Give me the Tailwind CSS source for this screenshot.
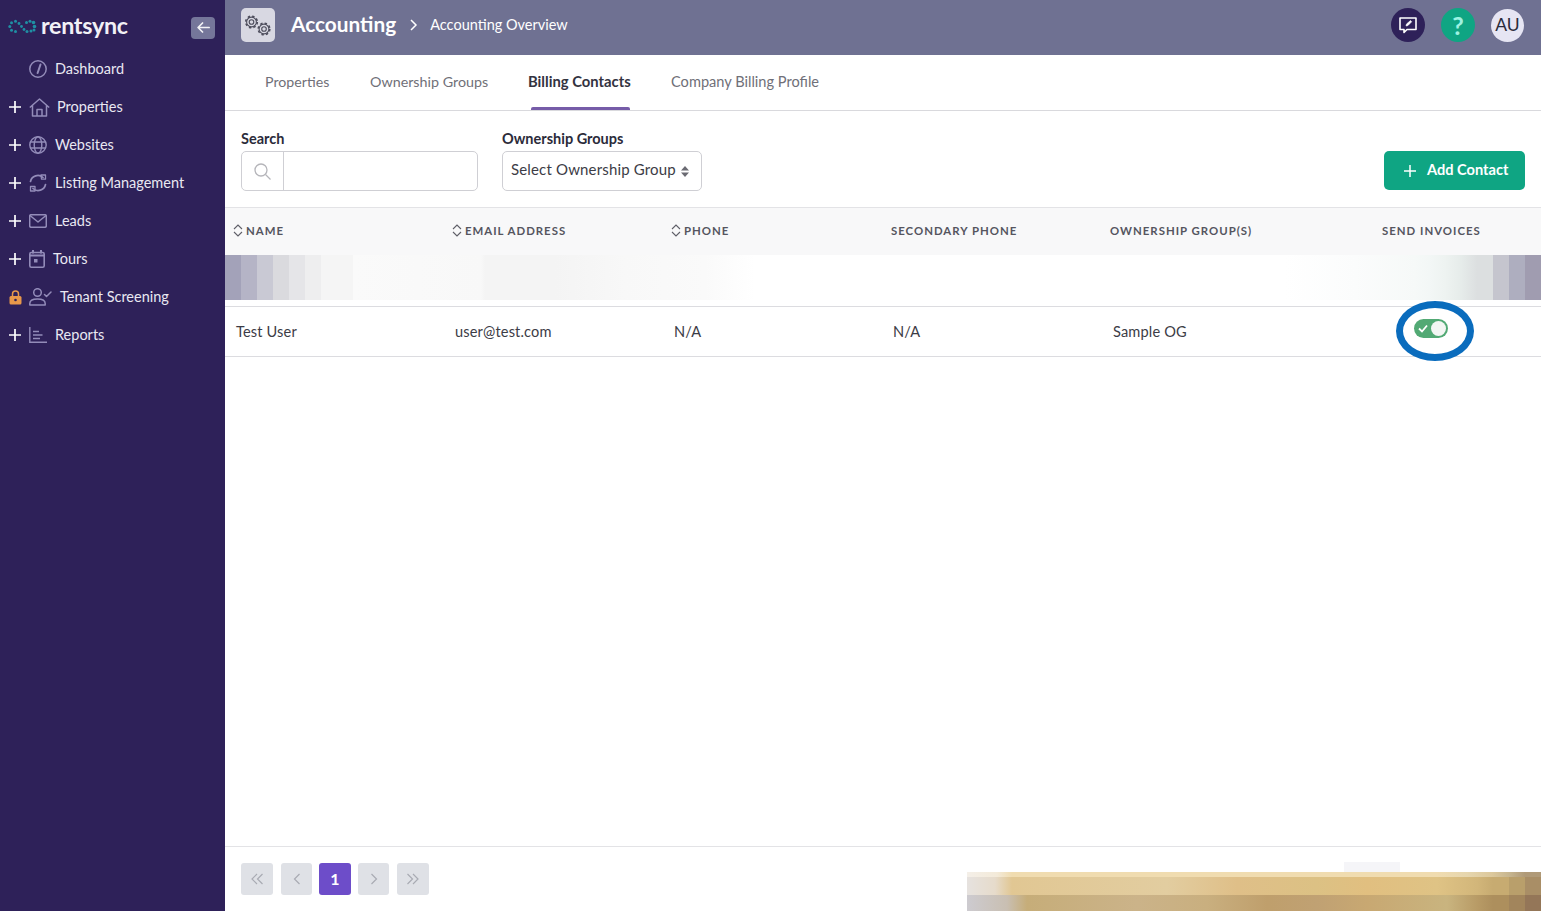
<!DOCTYPE html>
<html lang="en">
<head>
<meta charset="utf-8">
<title>Accounting Overview</title>
<script src="https://cdn.jsdelivr.net/npm/@tailwindcss/browser@4"></script>
</head>
<body class="font-['Lato','Noto_Sans',sans-serif] text-[#2b2b3a] overflow-hidden">
<div class="flex h-[911px] w-[1541px]">
  <!-- Sidebar -->
  <aside class="w-[225px] shrink-0 bg-[#2e2159] text-[#e9e8f2] text-[14.5px]">
    <div class="flex h-[50px] items-center pl-[8px] pr-[10px] pt-[5px]">
      <svg class="w-[29px] h-[15px] -mt-[3px]" viewBox="0 0 29 14" fill="#1f8fa3">
        <circle cx="1.800" cy="7" r="1.500"/><circle cx="3.500" cy="3.200" r="1.500"/><circle cx="3.500" cy="10.800" r="1.500"/><circle cx="7.500" cy="1.800" r="1.500"/><circle cx="7.500" cy="12" r="1.500"/><circle cx="11" cy="4" r="1.400"/><circle cx="13.500" cy="7" r="1.400"/><circle cx="16" cy="10" r="1.400"/><circle cx="19" cy="12" r="1.500"/><circle cx="18.500" cy="3" r="1.500"/><circle cx="22" cy="1.800" r="1.500"/><circle cx="23" cy="11.500" r="1.500"/><circle cx="25.500" cy="3" r="1.800"/><circle cx="26.500" cy="7" r="1.800"/><circle cx="26" cy="10.500" r="1.500"/>
      </svg>
      <span class="ml-[4px] -mt-[3px] text-[23.300px] leading-none font-bold tracking-[-0.3px] text-[#f2f1f6]">rentsync</span>
      <button class="ml-auto w-[24px] h-[22px] rounded-[4px] bg-[#75769a] flex items-center justify-center">
        <svg class="w-[15px] h-[15px]" viewBox="0 0 16 16" fill="none" stroke="#f2f2f6" stroke-width="1.800" stroke-linecap="round" stroke-linejoin="round"><path d="M14 8H2.500M7 3.200 2.200 8 7 12.800"/></svg>
      </button>
    </div>
    <nav>
      <a class="flex items-center h-[38px]">
        <span class="w-[29px]"></span>
        <svg class="w-[18px] h-[18px]" viewBox="0 0 18 18" fill="none" stroke="#938cb9" stroke-width="1.500" stroke-linecap="round"><circle cx="9" cy="9" r="8.200"/><path d="M11.500 4.500 8.600 13" stroke-width="2"/></svg>
        <span class="ml-[8px]">Dashboard</span>
      </a>
      <a class="flex items-center h-[38px]">
        <span class="w-[29px] pl-[9px]"><svg class="w-[12px] h-[12px]" viewBox="0 0 12 12" stroke="#fff" stroke-width="1.700"><path d="M6 0v12M0 6h12"/></svg></span>
        <svg class="w-[21px] h-[19px]" viewBox="0 0 21 19" fill="none" stroke="#938cb9" stroke-width="1.500" stroke-linejoin="round"><path d="M.8 9.500 10.500 1l9.700 8.500M3.500 7.500V18h14V7.500M8 18v-6.500h5V18"/></svg>
        <span class="ml-[7px]">Properties</span>
      </a>
      <a class="flex items-center h-[38px]">
        <span class="w-[29px] pl-[9px]"><svg class="w-[12px] h-[12px]" viewBox="0 0 12 12" stroke="#fff" stroke-width="1.700"><path d="M6 0v12M0 6h12"/></svg></span>
        <svg class="w-[18px] h-[18px]" viewBox="0 0 18 18" fill="none" stroke="#938cb9" stroke-width="1.400"><circle cx="9" cy="9" r="8.200"/><ellipse cx="9" cy="9" rx="3.800" ry="8.200"/><path d="M1.500 6h15M1.500 12h15"/></svg>
        <span class="ml-[8px]">Websites</span>
      </a>
      <a class="flex items-center h-[38px]">
        <span class="w-[29px] pl-[9px]"><svg class="w-[12px] h-[12px]" viewBox="0 0 12 12" stroke="#fff" stroke-width="1.700"><path d="M6 0v12M0 6h12"/></svg></span>
        <svg class="w-[18px] h-[18px]" viewBox="0 0 18 18" fill="none" stroke="#938cb9" stroke-width="1.700" stroke-linecap="round" stroke-linejoin="round"><path d="M1.500 7.500A7.500 7.500 0 0 1 14 3.500M16.500 10.500A7.500 7.500 0 0 1 4 14.500"/><path d="M12 1h4.500v4.200h-4zM1.500 12.500H6V17H1.500z" stroke-width="1.300"/></svg>
        <span class="ml-[8px]">Listing Management</span>
      </a>
      <a class="flex items-center h-[38px]">
        <span class="w-[29px] pl-[9px]"><svg class="w-[12px] h-[12px]" viewBox="0 0 12 12" stroke="#fff" stroke-width="1.700"><path d="M6 0v12M0 6h12"/></svg></span>
        <svg class="w-[18px] h-[14px]" viewBox="0 0 18 14" fill="none" stroke="#938cb9" stroke-width="1.500" stroke-linejoin="round"><rect x=".7" y=".7" width="16.600" height="12.600" rx="1.500"/><path d="M1 1.500 9 8l8-6.500"/></svg>
        <span class="ml-[8px]">Leads</span>
      </a>
      <a class="flex items-center h-[38px]">
        <span class="w-[29px] pl-[9px]"><svg class="w-[12px] h-[12px]" viewBox="0 0 12 12" stroke="#fff" stroke-width="1.700"><path d="M6 0v12M0 6h12"/></svg></span>
        <svg class="w-[16px] h-[18px]" viewBox="0 0 16 18" fill="none" stroke="#938cb9" stroke-width="1.600"><rect x=".8" y="2.500" width="14.400" height="14.700" rx="1.500"/><path d="M4 0v3.500M12 0v3.500M.8 5.500h14.400" stroke-width="2"/><rect x="5" y="9" width="3.500" height="3.500" fill="#938cb9" stroke="none"/></svg>
        <span class="ml-[8px]">Tours</span>
      </a>
      <a class="flex items-center h-[38px]">
        <span class="w-[29px] pl-[9px]"><svg class="w-[13px] h-[15px]" viewBox="0 0 13 15" fill="none"><path d="M3.500 6.500V4a3 3 0 0 1 6 0v2.500" stroke="#e8984a" stroke-width="1.500"/><rect x=".5" y="6" width="12" height="8.500" rx="1.500" fill="#e8984a"/><circle cx="6.500" cy="10" r="1.300" fill="#2e2159"/></svg></span>
        <svg class="w-[23px] h-[18px]" viewBox="0 0 23 18" fill="none" stroke="#938cb9" stroke-width="1.500" stroke-linecap="round" stroke-linejoin="round"><circle cx="8.500" cy="4.500" r="3.800"/><path d="M.8 17v-1.500c0-3 3-4.500 7.700-4.500s7.700 1.500 7.700 4.500V17zM15.500 6.500l2 2 4.500-4.500"/></svg>
        <span class="ml-[8px]">Tenant Screening</span>
      </a>
      <a class="flex items-center h-[38px]">
        <span class="w-[29px] pl-[9px]"><svg class="w-[12px] h-[12px]" viewBox="0 0 12 12" stroke="#fff" stroke-width="1.700"><path d="M6 0v12M0 6h12"/></svg></span>
        <svg class="w-[18px] h-[16px]" viewBox="0 0 18 16" fill="none" stroke="#938cb9" stroke-width="1.400"><path d="M.8 0v15.200H18M4 4.500h6M4 8h9.500M4 11.500h7"/></svg>
        <span class="ml-[8px]">Reports</span>
      </a>
    </nav>
  </aside>

  <!-- Main -->
  <main class="relative flex-1 min-w-0 flex flex-col bg-white">
    <header class="h-[55px] shrink-0 bg-[#6f7192] flex items-center pl-[16px] pr-[17px] pb-[5px]">
      <span class="w-[34px] h-[34px] rounded-[5px] bg-[#d8d8e2] flex items-center justify-center">
        <svg class="w-[34px] h-[34px]" viewBox="0 0 34 34" fill="none" stroke="#4d4d5c" stroke-width="1.100">
          <circle cx="10.500" cy="14" r="2.300"/><circle cx="10.500" cy="14" r="4.900"/><circle cx="10.500" cy="14" r="5.800" stroke-width="1.600" stroke-dasharray="2.400 2.150"/>
          <circle cx="23" cy="21" r="2.300"/><circle cx="23" cy="21" r="4.900"/><circle cx="23" cy="21" r="5.800" stroke-width="1.600" stroke-dasharray="2.400 2.150"/>
        </svg>
      </span>
      <span class="ml-[16px] pb-[2px] text-[20.800px] font-bold text-white">Accounting</span>
      <svg class="ml-[13px] w-[9px] h-[12px]" viewBox="0 0 9 12" fill="none" stroke="#fff" stroke-width="1.500"><path d="m2 1 5 5-5 5"/></svg>
      <span class="ml-[12px] text-[14.500px] text-white">Accounting Overview</span>
      <div class="ml-auto flex items-center gap-[16px]">
        <span class="w-[34px] h-[34px] rounded-full bg-[#2e2159] flex items-center justify-center">
          <svg class="w-[20px] h-[20px]" viewBox="0 0 20 20" fill="none" stroke="#fff" stroke-width="1.600"><path d="M2 3h16v11.500H9l-3 3v-3H2z" stroke-linejoin="round"/><path d="m8 11 .5-2 4-3.500 1.200 1.300L10 10.500z" fill="#fff" stroke-width=".6"/></svg>
        </span>
        <span class="w-[34px] h-[34px] rounded-full bg-[#0fa583] flex items-center justify-center text-[#9ef2e2] text-[25px] font-bold leading-none">?</span>
        <span class="w-[33px] h-[33px] rounded-full bg-[#e6e5f3] flex items-center justify-center text-[#2b2b3a] text-[17.500px]">AU</span>
      </div>
    </header>

    <div class="h-[56px] shrink-0 border-b border-[#d9d9dd] flex gap-[40px] pl-[40px] text-[#707078] whitespace-nowrap">
      <a class="pt-[16px] text-[14.200px] w-[65px]">Properties</a>
      <a class="pt-[16px] text-[14.300px] w-[118px]">Ownership Groups</a>
      <a class="pt-[15px] relative font-bold text-[14.800px] text-[#33333f] h-[55px] w-[103px]">Billing Contacts<span class="absolute left-[3px] right-[1px] bottom-0 h-[3px] rounded-t-[2px] bg-[#765ca8]"></span></a>
      <a class="pt-[16px] text-[14.600px]">Company Billing Profile</a>
    </div>

    <div class="h-[97px] shrink-0 border-b border-[#e3e3e6] flex items-start pl-[16px] pr-[16px] pt-[19px] text-[15px]">
      <div class="w-[237px]">
        <div class="font-bold leading-[17px] text-[14.500px] mb-[4px]">Search</div>
        <div class="h-[40px] border border-[#cfcfd4] rounded-[5px] flex">
          <span class="w-[42px] border-r border-[#cfcfd4] flex items-center justify-center">
            <svg class="w-[17px] h-[17px]" viewBox="0 0 17 17" fill="none" stroke="#b5b5ba" stroke-width="1.300"><circle cx="7" cy="7" r="6"/><path d="m11.500 11.500 5 5"/></svg>
          </span>
        </div>
      </div>
      <div class="ml-[24px] w-[200px]">
        <div class="font-bold leading-[17px] text-[14.500px] mb-[4px]">Ownership Groups</div>
        <div class="h-[40px] border border-[#cfcfd4] rounded-[5px] flex items-center justify-between pl-[8px] pr-[12px] pb-[3px] text-[#3c3c46] tracking-[0.16px]">
          <span>Select Ownership Group</span>
          <svg class="w-[8px] h-[11px] mt-[3px]" viewBox="0 0 8 11" fill="#6b6b73"><path d="M4 0 8 4.500H0zM4 11 0 6.500h8z"/></svg>
        </div>
      </div>
      <button class="ml-auto mt-[21px] w-[141px] h-[39px] rounded-[5px] bg-[#0fa583] text-white font-bold flex items-center pl-[20px] text-[14.600px]">
        <svg class="w-[12px] h-[12px] mr-[11px]" viewBox="0 0 12 12" stroke="#fff" stroke-width="1.500"><path d="M6 0v12M0 6h12"/></svg><span class="pb-[1px]">Add Contact</span>
      </button>
    </div>

    <div class="h-[47px] shrink-0 bg-[#f8f8f9] grid grid-cols-[219px_219px_219px_219px_272px_1fr] items-center text-[11.400px] font-bold tracking-[1px] text-[#55555f] pl-[8px] pb-[2px]">
      <div class="flex items-center gap-[3px]">
        <svg class="w-[10px] h-[13px]" viewBox="0 0 10 13" fill="none" stroke="#5f5f68" stroke-width="1.100"><path d="m1 5 4-4 4 4M1 8l4 4 4-4"/></svg>NAME
      </div>
      <div class="flex items-center gap-[3px]">
        <svg class="w-[10px] h-[13px]" viewBox="0 0 10 13" fill="none" stroke="#5f5f68" stroke-width="1.100"><path d="m1 5 4-4 4 4M1 8l4 4 4-4"/></svg>EMAIL ADDRESS
      </div>
      <div class="flex items-center gap-[3px]">
        <svg class="w-[10px] h-[13px]" viewBox="0 0 10 13" fill="none" stroke="#5f5f68" stroke-width="1.100"><path d="m1 5 4-4 4 4M1 8l4 4 4-4"/></svg>PHONE
      </div>
      <div class="pl-[1px]">SECONDARY PHONE</div>
      <div class="pl-[1px]">OWNERSHIP GROUP(S)</div>
      <div class="pl-[1px]">SEND INVOICES</div>
    </div>

    <div class="h-[52px] shrink-0 border-b border-[#dcdce0] pb-[6px]">
      <div class="h-[45px] bg-[linear-gradient(90deg,#a3a2b9_0,#a3a2b9_16px,#b5b4c6_16px,#b5b4c6_32px,#c9c9d4_32px,#c9c9d4_48px,#dadade_48px,#dadade_64px,#e5e5e8_64px,#e5e5e8_80px,#eeeeef_80px,#eeeeef_96px,#f5f5f5_96px,#f5f5f5_128px,#fafafa_128px,#f8f8f8_256px,#f4f4f4_260px,#f4f4f4_330px,#f8f8f8_400px,#fafafa_480px,#ffffff_530px,#ffffff_1060px,#fbfcfc_1130px,#f6f9f8_1190px,#f3f7f6_1204px,#eef3f1_1220px,#e6ecea_1236px,#dcdfe0_1252px,#dcdfe0_1268px,#c5c5ce_1268px,#c5c5ce_1284px,#aeaebf_1284px,#aeaebf_1300px,#a09cb0_1300px)]"></div>
    </div>

    <div class="h-[50px] shrink-0 border-b border-[#dcdce0] grid grid-cols-[219px_219px_219px_219px_272px_1fr] items-center text-[14.600px] tracking-[0.15px] text-[#3c3c46] pl-[11px]">
      <div>Test User</div>
      <div>user@test.com</div>
      <div>N/A</div>
      <div>N/A</div>
      <div class="pl-[1px]">Sample OG</div>
      <div class="pl-[30px]">
        <span class="relative block w-[34px] h-[19px] rounded-full bg-[#52a974] -mt-[6px]">
          <svg class="absolute left-[4px] top-[5px] w-[10px] h-[9px]" viewBox="0 0 10 9" fill="none" stroke="#fff" stroke-width="1.800"><path d="m1 4.500 3 3 5-6"/></svg>
          <span class="absolute right-[2px] top-[2px] w-[15px] h-[15px] rounded-full bg-[#f3f6f3]"></span>
        </span>
      </div>
    </div>

    <div class="flex-1"></div>

    <div class="h-[65px] shrink-0 border-t border-[#e3e3e6] flex items-start pt-[16px] pl-[16px] gap-[7px]">
      <span class="w-[32px] h-[32px] rounded-[3px] bg-[#dfe1e6] flex items-center justify-center"><svg class="w-[14px] h-[12px]" viewBox="0 0 14 12" fill="none" stroke="#a9abb3" stroke-width="1.200"><path d="M7 1 2 6l5 5M12.500 1l-5 5 5 5"/></svg></span>
      <span class="ml-[1px] w-[31px] h-[32px] rounded-[3px] bg-[#dfe1e6] flex items-center justify-center"><svg class="w-[8px] h-[12px]" viewBox="0 0 8 12" fill="none" stroke="#a9abb3" stroke-width="1.200"><path d="M6.500 1l-5 5 5 5"/></svg></span>
      <span class="w-[32px] h-[32px] rounded-[3px] bg-[#6d4dc9] text-white text-[16px] font-bold flex items-center justify-center">1</span>
      <span class="w-[31px] h-[32px] rounded-[3px] bg-[#dfe1e6] flex items-center justify-center"><svg class="w-[8px] h-[12px]" viewBox="0 0 8 12" fill="none" stroke="#a9abb3" stroke-width="1.200"><path d="m1.500 1 5 5-5 5"/></svg></span>
      <span class="ml-[1px] w-[32px] h-[32px] rounded-[3px] bg-[#dfe1e6] flex items-center justify-center"><svg class="w-[14px] h-[12px]" viewBox="0 0 14 12" fill="none" stroke="#a9abb3" stroke-width="1.200"><path d="m1.500 1 5 5-5 5M7 1l5 5-5 5"/></svg></span>
    </div>

    <!-- overlays -->
    <span class="absolute left-[1171px] top-[301px] w-[78px] h-[60px] rounded-[50%] border-[7px] border-[#0a6cbd]"></span>
    <span class="absolute left-[1119px] top-[862px] w-[56px] h-[10px] bg-[#f5f5f8]"></span>
    <div class="absolute left-[742px] top-[872px] w-[574px] h-[39px] flex flex-col">
      <div class="h-[5px] bg-[linear-gradient(90deg,#f4efe8_0,#f3ead9_30px,#f0dcb0_45px,#f0dcb0_470px,#e6d6ae_500px,#dcc89c_525px,#c7b690_542px,#b09a78_558px)]"></div>
      <div class="h-[18px] bg-[linear-gradient(90deg,#e6e2df_0,#e6dbcb_28px,#e1c793_45px,#e2cda0_200px,#dfbf88_270px,#dcc184_350px,#e1bf80_400px,#dfc385_470px,#d2b67a_510px,#c7ab71_526px,#c7ab71_542px,#b99f6b_542px,#b99f6b_558px,#a98e66_558px)]"></div>
      <div class="flex-1 bg-[linear-gradient(90deg,#cdcbd0_0,#c9bfb2_40px,#c6ad79_60px,#cbb389_170px,#c9af7f_240px,#bf9f6c_300px,#c0a173_350px,#c8a872_400px,#c9b47f_480px,#b89b66_510px,#ad8f5d_526px,#ad8f5d_542px,#a2855c_542px,#a2855c_558px,#947658_558px)]"></div>
    </div>
  </main>
</div>
</body>
</html>
